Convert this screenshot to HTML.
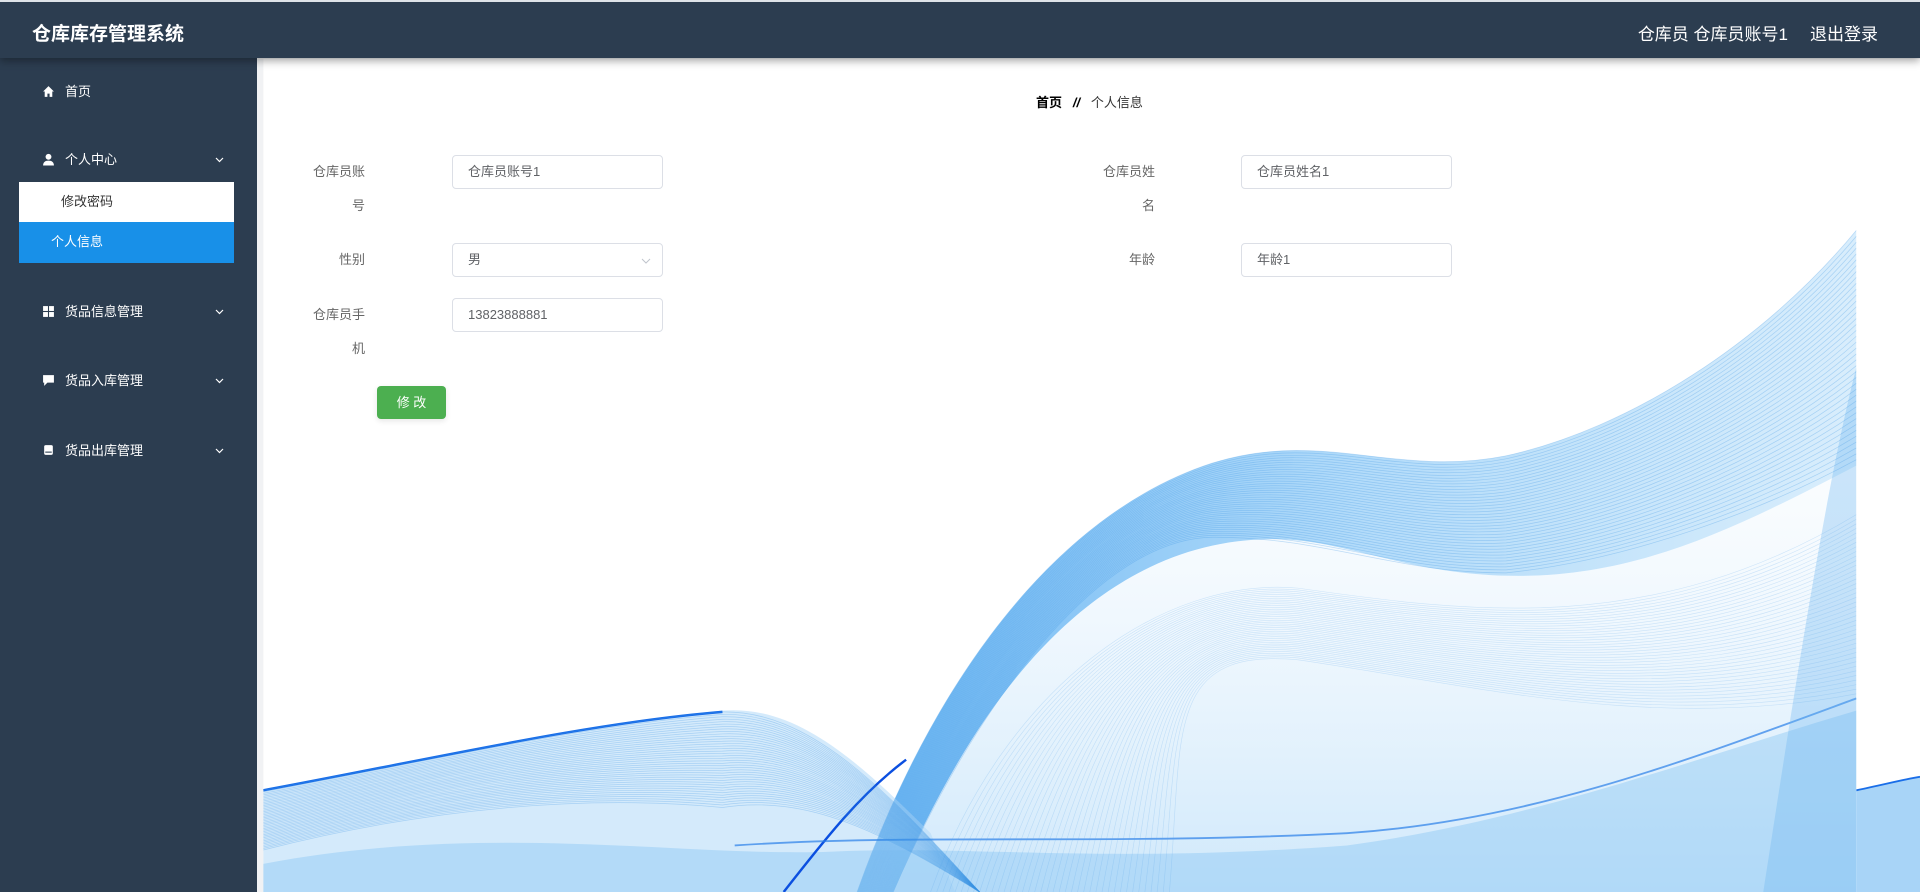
<!DOCTYPE html>
<html><head><meta charset="utf-8">
<style>
*{margin:0;padding:0;box-sizing:border-box}
body{width:1920px;height:892px;overflow:hidden;background:#f1f2f4;font-family:"Liberation Sans","Noto Sans CJK SC",sans-serif;position:relative}
.hd{position:absolute;left:0;top:0;width:1920px;height:58px;background:#2c3d50;border-top:2px solid #dfe3e8;box-shadow:0 3px 8px rgba(0,0,0,.35);z-index:5}
.hd .t{position:absolute;left:32px;top:17px;color:#fff;font-size:19px;font-weight:bold}
.hd .r{position:absolute;right:42px;top:18px;color:#fff;font-size:17px}
.hd .r span{margin-left:22px}
.sb{position:absolute;left:0;top:58px;width:257px;height:834px;background:#2c3d50;z-index:3}
.mi{position:absolute;left:0;width:257px;color:#fff;font-size:13px;height:20px;line-height:20px}
.mi .ic{position:absolute;left:42px;top:3px;width:13px;height:13px}
.mi .tx{position:absolute;left:65px}
.mi .ch{position:absolute;left:215px;top:7px;width:9px;height:6px}
.sub{position:absolute;left:19px;width:215px;font-size:13px;height:40px;line-height:40px}
svg.w{position:absolute;left:0;top:0}
.bc{position:absolute;left:1036px;top:92px;font-size:13px;color:#333;z-index:2}
.bc b{color:#000}
.lb{position:absolute;width:70px;text-align:right;color:#666;font-size:13px;line-height:34px;z-index:2}
.in{position:absolute;width:211px;height:34px;border:1px solid #dcdfe6;border-radius:4px;background:#fff;font-size:13px;color:#606266;line-height:32px;padding-left:15px;z-index:2}
.btn{position:absolute;left:377px;top:386px;width:69px;height:33px;background:#4caf50;border-radius:4px;color:#fff;font-size:13px;text-align:center;line-height:33px;z-index:2;box-shadow:0 2px 6px rgba(0,0,0,.1)}
</style></head><body>
<svg class="w" width="1920" height="892" viewBox="0 0 1568 728" preserveAspectRatio="none" style="z-index:1">
<defs>
<clipPath id="c"><rect x="215" y="48" width="1353" height="680"/></clipPath>
<clipPath id="c2"><rect x="215" y="48" width="1301" height="680"/></clipPath>
<linearGradient id="g1" x1="0" y1="0" x2="1" y2="0"><stop offset="0" stop-color="#4aa6f0"/><stop offset=".5" stop-color="#9fd2f8"/><stop offset="1" stop-color="#cfe9fb"/></linearGradient>
<linearGradient id="g2" x1="0" y1="0" x2="0" y2="1"><stop offset="0" stop-color="#d8ecfc" stop-opacity=".2"/><stop offset="1" stop-color="#9bcff6" stop-opacity=".8"/></linearGradient>
</defs>
<g clip-path="url(#c)">
<rect x="215" y="48" width="1353" height="680" fill="#fff"/>
<path d="M1516,645 C1540,640 1555,636 1568,634 L1568,728 L1516,728 Z" fill="#a8d4f7"/>
<path d="M1516,645 C1540,640 1555,636 1568,634" stroke="#1a6ee8" stroke-width="1.5" fill="none"/>
</g>
<g clip-path="url(#c2)" id="wg">
<path d="M700,728 C760,560 860,420 990,378 C1080,350 1140,390 1230,372 C1330,350 1440,280 1516,188 L1516,380 C1420,430 1340,470 1240,470 C1150,470 1100,440 1040,440 C900,440 800,560 730,728 Z" fill="url(#g1)" opacity=".8"/>
<path d="M730,728 C800,560 900,440 1040,440 C1100,440 1150,470 1240,470 C1340,470 1420,430 1516,380 L1516,728 Z" fill="url(#g2)" opacity=".6"/>
<path d="M215,645 C350,620 480,590 590,580 C650,575 700,620 760,680 L780,728 L215,728 Z" fill="#b7dcf8" opacity=".6"/>
<path d="M215,645 C350,620 480,590 590,581" stroke="#1a6ee8" stroke-width="2" fill="none"/>
<path d="M215,705 C400,670 560,700 680,695 C800,690 900,705 1100,690 C1250,670 1380,620 1516,580 L1516,728 L215,728 Z" fill="#8cc7f4" opacity=".45"/>
<path d="M640,728 C670,690 700,650 740,620" stroke="#0b4fe0" stroke-width="2" fill="none"/>
<path d="M600,690 C750,680 900,690 1100,680 C1250,670 1380,620 1516,570" stroke="#2a7fe8" stroke-width="1.5" fill="none" opacity=".7"/>
<path d="M1440,728 C1460,600 1490,400 1516,300 L1516,728 Z" fill="#6fb7f2" opacity=".35"/>
</g>
</svg>
<script>
(function(){var g=document.getElementById('wg'),s='';
for(var i=0;i<40;i++){var t=i/40;
var y0=378+t*62,y1=372+t*98,y2=188+t*192;
s+='<path d="M'+(700+t*30)+',728 C'+(760+t*40)+','+(560+t*10)+' '+(860+t*40)+','+(420+t*20)+' 990,'+y0+' C1080,'+(350+t*90)+' 1140,'+(390+t*80)+' 1230,'+y1+' C1330,'+(350+t*110)+' 1440,'+(280+t*140)+' 1516,'+y2+'" stroke="#3b95e6" stroke-width=".6" fill="none" opacity=".3"/>';
s+='<path d="M215,'+(645+t*50)+' C350,'+(620+t*40)+' 480,'+(590+t*60)+' 590,'+(581+t*80)+' C660,'+(580+t*70)+' 720,'+(640+t*40)+' 800,728" stroke="#3b95e6" stroke-width=".6" fill="none" opacity=".3"/>';
s+='<path d="M'+(760+t*200)+',728 C'+(820+t*150)+','+(560+t*40)+' 950,'+(470+t*60)+' 1060,'+(480+t*60)+' C1200,'+(500+t*60)+' 1350,'+(520+t*80)+' 1516,'+(420+t*150)+'" stroke="#5aa8ec" stroke-width=".5" fill="none" opacity=".25"/>';}
g.insertAdjacentHTML('beforeend',s);})();
</script>
<div class="hd"><div class="t">仓库库存管理系统</div><div class="r">仓库员 仓库员账号1<span>退出登录</span></div></div>
<div class="sb">
<div class="mi" style="top:24px"><svg class="ic" viewBox="0 0 12 12"><path d="M6 1L1 6h1.5v5h2.5V8h2v3h2.5V6H11z" fill="#fff"/></svg><span class="tx">首页</span></div>
<div class="mi" style="top:92px"><svg class="ic" viewBox="0 0 12 12"><circle cx="6" cy="3.5" r="2.7" fill="#fff"/><path d="M1 11.5c0-3 2-4.5 5-4.5s5 1.5 5 4.5z" fill="#fff"/></svg><span class="tx">个人中心</span><svg class="ch" viewBox="0 0 9 6"><path d="M1 1l3.5 3.5L8 1" stroke="#fff" stroke-width="1.2" fill="none"/></svg></div>
<div class="sub" style="top:124px;background:#fff;color:#333;padding-left:42px">修改密码</div>
<div class="sub" style="top:164px;background:#1890e8;color:#fff;padding-left:32px;height:41px">个人信息</div>
<div class="mi" style="top:244px"><svg class="ic" viewBox="0 0 12 12"><rect x="1" y="1" width="4.5" height="4.5" fill="#fff"/><rect x="6.5" y="1" width="4.5" height="4.5" fill="#fff"/><rect x="1" y="6.5" width="4.5" height="4.5" fill="#fff"/><rect x="6.5" y="6.5" width="4.5" height="4.5" fill="#fff"/></svg><span class="tx">货品信息管理</span><svg class="ch" viewBox="0 0 9 6"><path d="M1 1l3.5 3.5L8 1" stroke="#fff" stroke-width="1.2" fill="none"/></svg></div>
<div class="mi" style="top:313px"><svg class="ic" viewBox="0 0 12 12"><path d="M1 1h10v7H5l-3 3V8H1z" fill="#fff"/></svg><span class="tx">货品入库管理</span><svg class="ch" viewBox="0 0 9 6"><path d="M1 1l3.5 3.5L8 1" stroke="#fff" stroke-width="1.2" fill="none"/></svg></div>
<div class="mi" style="top:383px"><svg class="ic" viewBox="0 0 12 12"><rect x="2" y="1" width="8" height="9" rx="1.5" fill="#fff"/><rect x="3" y="7" width="6" height="1" fill="#2c3d50"/></svg><span class="tx">货品出库管理</span><svg class="ch" viewBox="0 0 9 6"><path d="M1 1l3.5 3.5L8 1" stroke="#fff" stroke-width="1.2" fill="none"/></svg></div>
</div>
<div class="bc"><b>首页</b>&nbsp;&nbsp;&nbsp;<b style="font-style:italic">//</b>&nbsp;&nbsp;&nbsp;个人信息</div>
<div class="lb" style="left:295px;top:155px">仓库员账<br>号</div>
<div class="in" style="left:452px;top:155px">仓库员账号1</div>
<div class="lb" style="left:1085px;top:155px">仓库员姓<br>名</div>
<div class="in" style="left:1241px;top:155px">仓库员姓名1</div>
<div class="lb" style="left:295px;top:243px">性别</div>
<div class="in" style="left:452px;top:243px">男<svg style="position:absolute;right:11px;top:14px" width="10" height="6" viewBox="0 0 10 6"><path d="M1 1l4 4 4-4" stroke="#c0c4cc" fill="none"/></svg></div>
<div class="lb" style="left:1085px;top:243px">年龄</div>
<div class="in" style="left:1241px;top:243px">年龄1</div>
<div class="lb" style="left:295px;top:298px">仓库员手<br>机</div>
<div class="in" style="left:452px;top:298px">13823888881</div>
<div class="btn">修 改</div>
</body></html>
